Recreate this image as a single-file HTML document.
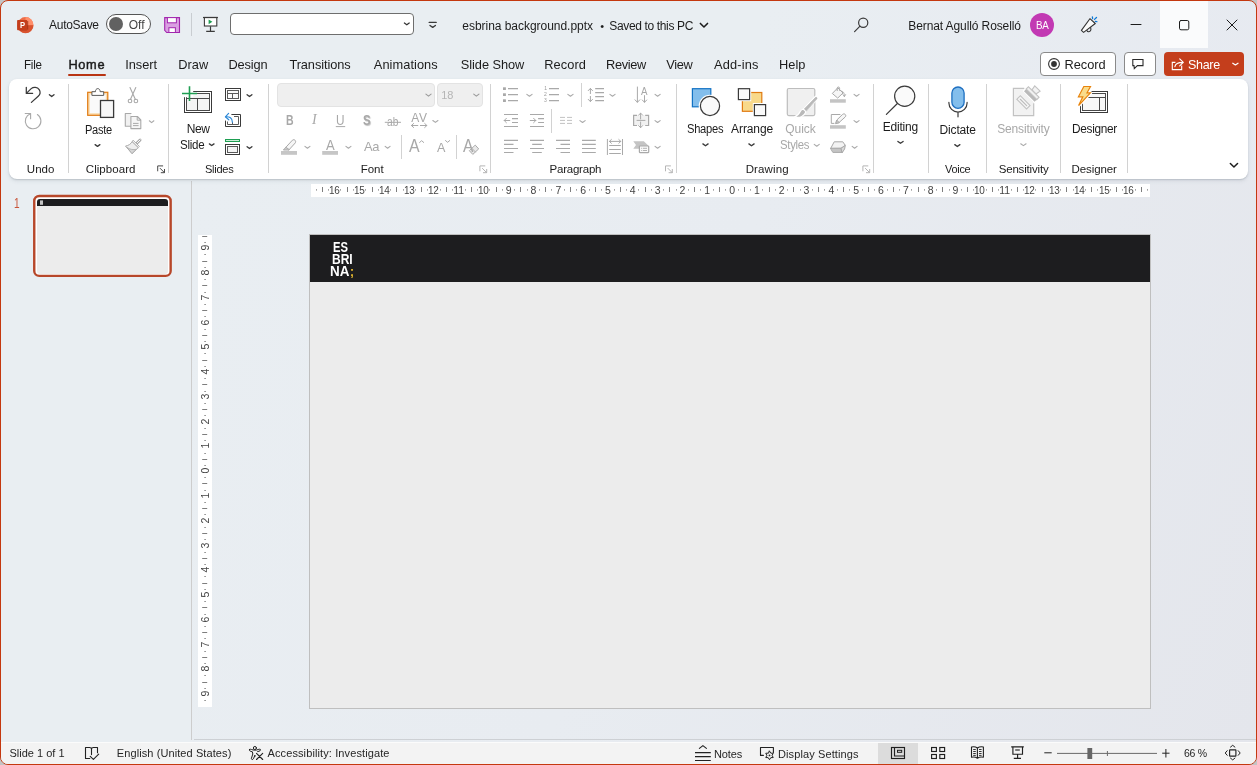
<!DOCTYPE html>
<html lang="en"><head><meta charset="utf-8"><title>esbrina background.pptx - PowerPoint</title>
<style>
html,body{margin:0;padding:0;}
body{width:1257px;height:765px;overflow:hidden;background:#c4c4c4;font-family:"Liberation Sans",sans-serif;position:relative;}
#win{position:absolute;left:0;top:0;width:1255px;height:763px;border:1px solid #c4380f;border-radius:8px;background:linear-gradient(100deg,#e9eef2 0%,#e9eef2 55%,#e6e9f0 100%);overflow:hidden;}
.abs{position:absolute;}
.t{position:absolute;white-space:nowrap;line-height:1em;}
#ribbon{left:9px;top:79px;width:1239px;height:100px;background:#fff;border-radius:8px;box-shadow:0 1px 1.5px rgba(70,80,95,.22),0 2px 4px rgba(70,80,95,.10);}
#edit{left:192px;top:180px;width:1064px;height:562px;background:linear-gradient(112deg,#e9eef2 0%,#e8ecf1 45%,#e4e6ec 100%);}
#status{left:1px;top:742px;width:1255px;height:22px;background:#f3f3f3;border-top:1px solid #fbfbfb;box-sizing:border-box;border-radius:0 0 7px 7px;}
#txt{position:absolute;left:0;top:0;width:1257px;height:765px;will-change:transform;}
.sep{position:absolute;width:1px;background:#d2d2d2;}
svg{position:absolute;left:0;top:0;overflow:visible;}
</style></head>
<body>
<div id="win"></div>
<div class="abs" id="edit"></div>
<div class="abs" style="left:191px;top:181px;width:1px;height:559px;background:#cdcdcd"></div>
<div class="abs" style="left:194px;top:739px;width:1062px;height:1px;background:#cdd0d4"></div>
<div class="abs" style="left:1160px;top:1px;width:48px;height:47px;background:#fafbfc"></div>
<div class="abs" id="ribbon"></div>
<div class="abs" style="left:311px;top:184px;width:839px;height:13px;background:#fff"></div>
<div class="abs" style="left:198px;top:235px;width:14px;height:472px;background:#fff"></div>
<div class="abs" style="left:309px;top:234px;width:842px;height:475px;background:#bfbfbf"></div>
<div class="abs" style="left:310px;top:235px;width:840px;height:473px;background:#ececec"></div>
<div class="abs" style="left:310px;top:235px;width:840px;height:47px;background:#1d1d1f"></div>
<svg width="1257" height="765"><rect x="34.25" y="196" width="136.4" height="79.9" rx="5" fill="#fff" stroke="#b7472a" stroke-width="2.4"/></svg>
<div class="abs" style="left:37px;top:199px;width:131px;height:74.5px;border-radius:3px;background:#ececec;overflow:hidden"><div style="height:7px;background:#1d1d1f"></div></div>
<div class="abs" id="status"></div>
<div class="abs" style="left:878px;top:743px;width:40px;height:21px;background:#dcdcdc"></div>
<div class="abs" style="left:106px;top:14px;width:45px;height:20px;box-sizing:border-box;border:1px solid #555;border-radius:10px;background:#fdfdfd"></div>
<div class="abs" style="left:109.2px;top:17.1px;width:13.8px;height:13.8px;border-radius:50%;background:#616161"></div>
<div class="abs" style="left:191px;top:13px;width:1px;height:23px;background:#c9cdd1"></div>
<div class="abs" style="left:230px;top:13px;width:184px;height:22px;box-sizing:border-box;border:1px solid #6e6e6e;border-radius:4px;background:#fff"></div>
<div class="abs" style="left:1030px;top:13px;width:24px;height:24px;border-radius:50%;background:#c239b3"></div>
<div class="abs" style="left:68px;top:74px;width:38px;height:2px;border-radius:1px;background:#b83413"></div>
<div class="abs" style="left:1040px;top:52px;width:76px;height:24px;box-sizing:border-box;border:1px solid #8a8a8a;border-radius:4px;background:#fff"></div>
<div class="abs" style="left:1124px;top:52px;width:32px;height:24px;box-sizing:border-box;border:1px solid #8a8a8a;border-radius:4px;background:#fff"></div>
<div class="abs" style="left:1164px;top:52px;width:80px;height:24px;border-radius:4px;background:#c43e1c"></div>
<div class="abs" style="left:277px;top:83px;width:158px;height:24px;box-sizing:border-box;border:1px solid #e3e3e3;border-radius:4px;background:#efefef"></div>
<div class="abs" style="left:437px;top:83px;width:46px;height:24px;box-sizing:border-box;border:1px solid #e3e3e3;border-radius:4px;background:#efefef"></div>
<div class="sep" style="left:68px;top:84px;height:89px"></div>
<div class="sep" style="left:168px;top:84px;height:89px"></div>
<div class="sep" style="left:268px;top:84px;height:89px"></div>
<div class="sep" style="left:490px;top:84px;height:89px"></div>
<div class="sep" style="left:676px;top:84px;height:89px"></div>
<div class="sep" style="left:873px;top:84px;height:89px"></div>
<div class="sep" style="left:928px;top:84px;height:89px"></div>
<div class="sep" style="left:986px;top:84px;height:89px"></div>
<div class="sep" style="left:1060px;top:84px;height:89px"></div>
<div class="sep" style="left:1127px;top:84px;height:89px"></div>
<div class="sep" style="left:401px;top:135px;height:24px"></div>
<div class="sep" style="left:456px;top:135px;height:24px"></div>
<div class="sep" style="left:581px;top:83px;height:24px"></div>
<div class="sep" style="left:551px;top:109px;height:24px"></div>
<svg width="1257" height="765" viewBox="0 0 1257 765" fill="none" stroke-linecap="round" stroke-linejoin="round"><circle cx="25.4" cy="25" r="7.9" fill="#ed6c47" stroke="none"/>
<path d="M25.5,17A8,8 0 0 1 33.5,25.3H25.5z" fill="#ff8f6b" stroke="none"/>
<path d="M17.5,25.3H33.5A8,8 0 0 1 17.5,25.3z" fill="#d9532f" stroke="none"/>
<path d="M19.5,29.6H28.2V21H27.2V30.2H19.5z" fill="#8c2a10" stroke="none" opacity="0.75"/>
<rect x="17.1" y="19.9" width="10.1" height="10.3" rx="0.8" stroke="none" stroke-width="0" fill="#c43e1c"/>
<path d="M164.7,17.6H179.5V32.5H166.7L164.7,30.3z" stroke="#a226ae" stroke-width="1.1" fill="#daa0e2" stroke-linejoin="miter"/>
<rect x="167.4" y="17.6" width="9.0" height="5.2" rx="0" stroke="#a226ae" stroke-width="1" fill="#fdfdfd" stroke-linejoin="miter"/>
<rect x="168.9" y="27.7" width="6.5" height="4.8" rx="0" stroke="#a226ae" stroke-width="1" fill="#fdfdfd" stroke-linejoin="miter"/>
<rect x="204.4" y="17.5" width="12.4" height="8.5" rx="0" stroke="#3a3a3a" stroke-width="1.1" fill="#fff" stroke-linejoin="miter"/>
<path d="M203,17.5H217.9" stroke="#3a3a3a" stroke-width="1.2" fill="none" stroke-linecap="butt"/>
<path d="M208.6,19.4V24.2L212.4,21.8z" stroke="none" stroke-width="0" fill="#1e9e52"/>
<path d="M210.5,26.2V31M206.2,31.4H214.8" stroke="#3a3a3a" stroke-width="1.2" fill="none" stroke-linecap="butt"/>
<path d="M404.39,23.05L406.80,24.75L409.21,23.05" stroke="#333" stroke-width="1.3"/>
<path d="M429.2,22.4H436.2" stroke="#3a3a3a" stroke-width="1.35" fill="none"/>
<path d="M430.00,25.47L432.70,27.32L435.40,25.47" stroke="#3a3a3a" stroke-width="1.35"/>
<path d="M700.38,23.46L703.95,27.00L707.52,23.46" stroke="#1c1c1c" stroke-width="1.6"/>
<circle cx="863.2" cy="22.8" r="4.6" stroke="#3a3a3a" stroke-width="1.2" fill="none"/>
<path d="M860,26.2L854.6,31.6" stroke="#3a3a3a" stroke-width="1.2"/>
<path d="M1131,24.5L1141,24.5" stroke="#1c1c1c" stroke-width="1"/>
<rect x="1179.5" y="20.5" width="9.3" height="9.3" rx="1.5" stroke="#1c1c1c" stroke-width="1" fill="none"/>
<path d="M1227,20L1237,30M1237,20L1227,30" stroke="#1c1c1c" stroke-width="1" fill="none"/>
<path d="M1089.9,18.7L1095.3,23.5L1083.6,32.4L1081.4,30.4z" stroke="#333" stroke-width="1.1" fill="#fbfbfb"/>
<path d="M1086.9,30.5C1087.6,32.2 1090.2,32.2 1090.9,29.8L1090.7,27.6" stroke="#333" stroke-width="1.1" fill="none"/>
<path d="M1092.4,17L1092.6,18.6M1094.5,19.4L1096.5,17.5M1095.3,21.4L1096.9,21.6" stroke="#0f7ad6" stroke-width="1.3" fill="none"/>
<circle cx="1054" cy="64" r="5.4" stroke="#333" stroke-width="1.1" fill="none"/>
<circle cx="1054" cy="64" r="2.9" stroke="none" stroke-width="0" fill="#333"/>
<path d="M1132.8,59.5H1143V65.6H1137.4L1134.3,68.6L1134,65.6H1132.8z" stroke="#2a2a2a" stroke-width="1.1" fill="none" stroke-linejoin="miter"/>
<path d="M1175.4,62.4H1172.3V69.6H1181.7V65.6" stroke="#fff" stroke-width="1.1" fill="none" stroke-linejoin="miter" stroke-linecap="butt"/>
<path d="M1174.9,66.6C1175.4,63.6 1178,62.4 1182.8,62.4M1179.7,58.9L1183.3,62.4L1179.7,65.9" stroke="#fff" stroke-width="1.15" fill="none"/>
<path d="M1232.79,63.25L1235.40,64.95L1238.01,63.25" stroke="#fff" stroke-width="1.3"/>
<path d="M26.3,87.3V93.4H32.6" stroke="#3a3a3a" stroke-width="1.25" fill="none"/>
<path d="M26.6,93.1L31.2,88.6C33.4,86.7 37.4,86.8 39.2,89.6C40.7,92 40,94.6 38.2,96.2L31.4,102.4" stroke="#3a3a3a" stroke-width="1.25" fill="none"/>
<path d="M49.41,94.67L51.70,96.53L53.99,94.67" stroke="#3a3a3a" stroke-width="1.35"/>
<path d="M25.2,113.5H30.6V118.7" stroke="#a9a9a9" stroke-width="1.1" fill="none"/>
<path d="M30.4,113.7A7.8,7.8 0 1 0 37.4,114.5" stroke="#a9a9a9" stroke-width="1.1" fill="none"/>
<rect x="87.7" y="92.3" width="20.1" height="23.0" rx="0" stroke="#e07b12" stroke-width="1.2" fill="#fbdcae" stroke-linejoin="miter"/>
<rect x="89.8" y="94.4" width="16.0" height="18.8" rx="0" stroke="none" stroke-width="0" fill="#fafafa" stroke-linejoin="miter"/>
<path d="M91.9,95V91.7H95.5C95.3,90 96.4,88.6 97.8,88.6C99.2,88.6 100.3,90 100.1,91.7H103.7V95z" stroke="#5a5a5a" stroke-width="1" fill="#fff"/>
<rect x="100.5" y="100.5" width="13.1" height="16.9" rx="0" stroke="#3a3a3a" stroke-width="1.3" fill="#f8f8f8" stroke-linejoin="miter"/>
<path d="M95.11,144.67L97.50,146.32L99.89,144.67" stroke="#3a3a3a" stroke-width="1.35"/>
<path d="M130,87.6L135.4,99.4M135.8,87.6L130.4,99.4" stroke="#a9a9a9" stroke-width="1.1" fill="none"/>
<circle cx="130" cy="101" r="1.8" stroke="#a9a9a9" stroke-width="1.1" fill="none"/>
<circle cx="135.9" cy="101" r="1.8" stroke="#a9a9a9" stroke-width="1.1" fill="none"/>
<path d="M131,113.5H125.3V126.3H130.6" stroke="#a9a9a9" stroke-width="1.1" fill="#f1f1f1"/>
<path d="M130.9,116.5H137.4L140.8,120V128.6H130.9z" stroke="#a9a9a9" stroke-width="1.1" fill="#f6f6f6"/>
<path d="M137.2,116.7V120.2H140.6" stroke="#a9a9a9" stroke-width="1" fill="none"/>
<path d="M133.4,123.4H138.2M133.4,125.6H138.2" stroke="#a9a9a9" stroke-width="1" fill="none"/>
<path d="M149.33,120.79L151.60,122.65L153.87,120.79" stroke="#a9a9a9" stroke-width="1.1"/>
<path d="M136.5,143.5L140.1,139.9" stroke="#a9a9a9" stroke-width="2.8" fill="none"/>
<path d="M136.5,143.5L140.1,139.9" stroke="#fafafa" stroke-width="1" fill="none"/>
<path d="M132.3,141.7L138.3,147.5L132.2,153.6L125.5,146.1C128.5,145.6 130.8,144 132.3,141.7z" stroke="#a9a9a9" stroke-width="1" fill="#efefef"/>
<path d="M127.2,147.6C130,149.6 133.4,149.9 136.2,149.4L132.2,153.4z" stroke="#a9a9a9" stroke-width="0.8" fill="#d6d6d6"/>
<path d="M133.4,140.5L139.4,146.4L138.3,147.5L132.3,141.7z" stroke="#a9a9a9" stroke-width="0.9" fill="#f6f6f6"/>
<path d="M157.7,170.9V165.9H162.7" stroke="#4a4a4a" stroke-width="1" fill="none"/>
<path d="M160.2,168.4L164.39999999999998,172.6M161.2,172.70000000000002H164.5V169.4" stroke="#4a4a4a" stroke-width="1" fill="none"/>
<rect x="184.5" y="91.5" width="27.0" height="21.0" rx="0" stroke="#3a3a3a" stroke-width="1" fill="#fff" stroke-linejoin="miter"/>
<rect x="186.5" y="93.5" width="23.0" height="17.0" rx="0" stroke="#4a4a4a" stroke-width="1" fill="#f4f4f4" stroke-linejoin="miter"/>
<path d="M186.5,98.5H209.5M197.5,98.5V110.5" stroke="#4a4a4a" stroke-width="1" fill="none" stroke-linecap="butt"/>
<rect x="181" y="85" width="12.2" height="12.2" rx="0" stroke="none" stroke-width="0" fill="#fff" stroke-linejoin="miter"/>
<path d="M182,93.5H197M189.5,86.2V101" stroke="#1e9e52" stroke-width="1.6" fill="none" stroke-linecap="butt"/>
<path d="M209.41,143.87L211.70,145.52L214.00,143.87" stroke="#3a3a3a" stroke-width="1.35"/>
<rect x="225.5" y="88.5" width="15.0" height="12.0" rx="0" stroke="#3a3a3a" stroke-width="1" fill="#fff" stroke-linejoin="miter"/>
<rect x="227.5" y="90.5" width="11.0" height="8.0" rx="0" stroke="#5a5a5a" stroke-width="1" fill="#fafafa" stroke-linejoin="miter"/>
<path d="M227.5,93.5H238.5M232.5,93.5V98.5" stroke="#5a5a5a" stroke-width="1" fill="none" stroke-linecap="butt"/>
<path d="M247.10,94.67L249.50,96.53L251.90,94.67" stroke="#3a3a3a" stroke-width="1.35"/>
<path d="M231.4,114.5H240.5V126.5H225.5V120.6" stroke="#3a3a3a" stroke-width="1" fill="none" stroke-linecap="butt"/>
<path d="M234,116.5H238.5V124.5H227.5V121.5M232.5,122V124.5" stroke="#5a5a5a" stroke-width="1" fill="none" stroke-linecap="butt"/>
<path d="M225.8,116.8C229.4,116.4 232.4,118 232.4,122.2" stroke="#2b88d8" stroke-width="1.2" fill="none"/>
<path d="M228.6,113.4L225.4,116.8L228.8,119.8" stroke="#2b88d8" stroke-width="1.2" fill="none"/>
<rect x="225.5" y="139.5" width="14.0" height="2.0" rx="0" stroke="#1e9e52" stroke-width="1" fill="#cdeed8" stroke-linejoin="miter"/>
<rect x="225.5" y="144.5" width="14.0" height="10.0" rx="0" stroke="#3a3a3a" stroke-width="1" fill="#fff" stroke-linejoin="miter"/>
<rect x="227.5" y="146.5" width="10.0" height="6.0" rx="0" stroke="#5a5a5a" stroke-width="1" fill="#f4f4f4" stroke-linejoin="miter"/>
<path d="M247.10,146.67L249.50,148.52L251.90,146.67" stroke="#3a3a3a" stroke-width="1.35"/>
<path d="M425.93,94.09L428.50,96.15L431.07,94.09" stroke="#9a9a9a" stroke-width="1.1"/>
<path d="M473.73,94.09L476.35,96.15L478.97,94.09" stroke="#9a9a9a" stroke-width="1.1"/>
<path d="M336.2,126.6L344.8,126.6" stroke="#a9a9a9" stroke-width="1"/>
<path d="M385.2,122.3L400.6,122.3" stroke="#a9a9a9" stroke-width="1"/>
<path d="M411.5,125.5H417.8M413.6,123.5L411.4,125.5L413.6,127.5" stroke="#a9a9a9" stroke-width="1" fill="none"/>
<path d="M420.4,125.5H426.8M424.7,123.5L426.9,125.5L424.7,127.5" stroke="#a9a9a9" stroke-width="1" fill="none"/>
<path d="M432.83,120.48L435.40,122.35L437.97,120.48" stroke="#a9a9a9" stroke-width="1.1"/>
<rect x="281" y="151" width="16" height="3.8" rx="0" stroke="none" stroke-width="0" fill="#c6c6c6" stroke-linejoin="miter"/>
<path d="M285.6,147.6L292.4,140.2C293.2,139.4 294.6,139.6 295.2,140.4C295.8,141.2 295.8,142.2 295.2,143L289,149.8z" stroke="#a9a9a9" stroke-width="1" fill="#f6f6f6"/>
<path d="M285.6,147.6L283.4,150H288.6L289,149.8z" stroke="#a9a9a9" stroke-width="1" fill="#cfcfcf"/>
<path d="M304.93,146.38L307.45,148.25L309.97,146.38" stroke="#a9a9a9" stroke-width="1.1"/>
<rect x="322.2" y="151" width="15.8" height="3.8" rx="0" stroke="none" stroke-width="0" fill="#c6c6c6" stroke-linejoin="miter"/>
<path d="M345.93,146.38L348.45,148.25L350.97,146.38" stroke="#a9a9a9" stroke-width="1.1"/>
<path d="M385.13,146.38L387.60,148.25L390.07,146.38" stroke="#a9a9a9" stroke-width="1.1"/>
<path d="M419.60,142.45L421.65,140.70L423.70,142.45" stroke="#a9a9a9" stroke-width="1"/>
<path d="M445.50,140.55L447.60,142.30L449.70,140.55" stroke="#a9a9a9" stroke-width="1"/>
<path d="M475.5,145.4L478.7,148.9L472.8,154.4L469.6,151z" stroke="#fff" stroke-width="2.4" fill="#fff"/>
<path d="M475.5,145.4L478.7,148.9L472.8,154.4L469.6,151z" stroke="#a9a9a9" stroke-width="1" fill="#e9e9e9"/>
<path d="M472.2,148.6L475.4,152" stroke="#a9a9a9" stroke-width="0.9" fill="none"/>
<path d="M479.9,170.9V165.9H484.9" stroke="#b5b5b5" stroke-width="1" fill="none"/>
<path d="M482.4,168.4L486.59999999999997,172.6M483.4,172.70000000000002H486.7V169.4" stroke="#b5b5b5" stroke-width="1" fill="none"/>
<rect x="503" y="87.3" width="2.9" height="2.7" rx="0" stroke="none" stroke-width="0" fill="#a9a9a9" stroke-linejoin="miter"/>
<rect x="503" y="93.3" width="2.9" height="2.7" rx="0" stroke="none" stroke-width="0" fill="#a9a9a9" stroke-linejoin="miter"/>
<rect x="503" y="99.3" width="2.9" height="2.7" rx="0" stroke="none" stroke-width="0" fill="#a9a9a9" stroke-linejoin="miter"/>
<path d="M508,88.6H518M508,94.6H518M508,100.6H518" stroke="#a9a9a9" stroke-width="1.1" fill="none" stroke-linecap="butt"/>
<path d="M526.83,94.39L529.45,96.25L532.07,94.39" stroke="#a9a9a9" stroke-width="1.1"/>
<path d="M549,88.6H559M549,94.6H559M549,100.6H559" stroke="#a9a9a9" stroke-width="1.1" fill="none" stroke-linecap="butt"/>
<path d="M567.83,94.39L570.45,96.25L573.07,94.39" stroke="#a9a9a9" stroke-width="1.1"/>
<path d="M590.4,88.6V93.6M588.3,90.6L590.4,88.4L592.5,90.6" stroke="#a9a9a9" stroke-width="1" fill="none"/>
<path d="M590.4,96.4V101.4M588.3,99.4L590.4,101.6L592.5,99.4" stroke="#a9a9a9" stroke-width="1" fill="none"/>
<path d="M595.2,88.6H604M595.2,92.6H604M595.2,96.6H604M595.2,100.6H604" stroke="#a9a9a9" stroke-width="1.1" fill="none" stroke-linecap="butt"/>
<path d="M609.93,94.39L612.50,96.25L615.07,94.39" stroke="#a9a9a9" stroke-width="1.1"/>
<path d="M637.4,87V102.2M635,99.8L637.4,102.3L639.8,99.8" stroke="#a9a9a9" stroke-width="1" fill="none"/>
<path d="M644.5,95.6V102.2M642.3,100L644.5,102.3L646.7,100" stroke="#a9a9a9" stroke-width="1" fill="none"/>
<path d="M655.03,94.39L657.60,96.25L660.17,94.39" stroke="#a9a9a9" stroke-width="1.1"/>
<path d="M504,114.5H518M504,126.5H518M512,118.6H518M512,122.5H518" stroke="#a9a9a9" stroke-width="1.1" fill="none" stroke-linecap="butt"/>
<path d="M504.2,120.5H509.8M506.4,118.3L504.2,120.5L506.4,122.7" stroke="#a9a9a9" stroke-width="1" fill="none"/>
<path d="M530,114.5H544M530,126.5H544M538.1,118.6H544M538.1,122.5H544" stroke="#a9a9a9" stroke-width="1.1" fill="none" stroke-linecap="butt"/>
<path d="M530.2,120.5H535.8M533.6,118.3L535.8,120.5L533.6,122.7" stroke="#a9a9a9" stroke-width="1" fill="none"/>
<path d="M560,117.4H565M560,120.4H565M560,123.4H565M567,117.4H572M567,120.4H572M567,123.4H572" stroke="#c2c2c2" stroke-width="1" fill="none" stroke-linecap="butt"/>
<path d="M579.93,120.59L582.55,122.45L585.17,120.59" stroke="#a9a9a9" stroke-width="1.1"/>
<rect x="634" y="115.4" width="14" height="10.0" rx="0" stroke="none" stroke-width="0" fill="#f1f1f1" stroke-linejoin="miter"/>
<path d="M637,115.3H633.6V125.5H637M645.2,115.3H648.6V125.5H645.2" stroke="#a9a9a9" stroke-width="1.2" fill="none" stroke-linecap="butt" stroke-linejoin="miter"/>
<path d="M637,120.4H645" stroke="#a9a9a9" stroke-width="1" fill="none"/>
<path d="M640.6,113.2V119M638.6,115.2L640.6,113.1L642.6,115.2" stroke="#a9a9a9" stroke-width="1" fill="none"/>
<path d="M640.6,122V127.6M638.6,125.6L640.6,127.7L642.6,125.6" stroke="#a9a9a9" stroke-width="1" fill="none"/>
<path d="M655.03,120.59L657.60,122.45L660.17,120.59" stroke="#a9a9a9" stroke-width="1.1"/>
<path d="M504.0,140.4H518.0M504.0,144.4H513.5M504.0,148.5H518.0M504.0,152.5H513.5" stroke="#a9a9a9" stroke-width="1.1" fill="none" stroke-linecap="butt"/>
<path d="M530.0,140.4H544.0M532.2,144.4H541.8M530.0,148.5H544.0M532.2,152.5H541.8" stroke="#a9a9a9" stroke-width="1.1" fill="none" stroke-linecap="butt"/>
<path d="M556.0,140.4H570.0M560.5,144.4H570.0M556.0,148.5H570.0M560.5,152.5H570.0" stroke="#a9a9a9" stroke-width="1.1" fill="none" stroke-linecap="butt"/>
<path d="M582.0,140.4H595.8M582.0,144.4H595.8M582.0,148.5H595.8M582.0,152.5H595.8" stroke="#a9a9a9" stroke-width="1.1" fill="none" stroke-linecap="butt"/>
<path d="M607.4,139V155M622.5,139V155" stroke="#a9a9a9" stroke-width="1" fill="none" stroke-linecap="butt"/>
<path d="M609.4,141.4H620.8M611.4,139.5L609.4,141.4L611.4,143.3M618.8,139.5L620.8,141.4L618.8,143.3" stroke="#a9a9a9" stroke-width="1" fill="none"/>
<path d="M609.2,145.5H620.8M609.2,149.5H620.8M609.2,153.5H620.8" stroke="#a9a9a9" stroke-width="1.1" fill="none" stroke-linecap="butt"/>
<path d="M633.3,141.2H643.8L648,145.2V148.8H633.3L636,145z" stroke="none" stroke-width="0" fill="#c4c4c4"/>
<rect x="639.4" y="146" width="9.3" height="6.6" rx="0.5" stroke="#a9a9a9" stroke-width="1.2" fill="#fbfbfb"/>
<path d="M641,148.3H641.8M642.8,148.3H647M641,150.5H641.8M642.8,150.5H647" stroke="#a9a9a9" stroke-width="0.9" fill="none" stroke-linecap="butt"/>
<path d="M655.03,146.38L657.60,148.25L660.17,146.38" stroke="#a9a9a9" stroke-width="1.1"/>
<path d="M665.5,170.9V165.9H670.5" stroke="#b5b5b5" stroke-width="1" fill="none"/>
<path d="M668,168.4L672.2,172.6M669,172.70000000000002H672.3V169.4" stroke="#b5b5b5" stroke-width="1" fill="none"/>
<rect x="692.4" y="88.7" width="18.4" height="18.1" rx="0" stroke="#1272c4" stroke-width="1.2" fill="#83beec" stroke-linejoin="miter"/>
<circle cx="710" cy="106" r="9.6" stroke="#fff" stroke-width="3.4" fill="#fff"/>
<circle cx="710" cy="106" r="9.6" stroke="#3a3a3a" stroke-width="1.2" fill="#fafafa"/>
<path d="M702.90,143.87L705.50,145.72L708.10,143.87" stroke="#3a3a3a" stroke-width="1.35"/>
<rect x="742.4" y="92.5" width="19.4" height="18.8" rx="0" stroke="#e07b12" stroke-width="1.2" fill="#f8d98a" stroke-linejoin="miter"/>
<rect x="738.4" y="88.7" width="11.2" height="10.9" rx="0" stroke="#fff" stroke-width="3.2" fill="#fff" stroke-linejoin="miter"/>
<rect x="754.4" y="104.6" width="11.2" height="11.0" rx="0" stroke="#fff" stroke-width="3.2" fill="#fff" stroke-linejoin="miter"/>
<rect x="738.4" y="88.7" width="11.2" height="10.9" rx="0" stroke="#3a3a3a" stroke-width="1.2" fill="#fafafa" stroke-linejoin="miter"/>
<rect x="754.4" y="104.6" width="11.2" height="11.0" rx="0" stroke="#3a3a3a" stroke-width="1.2" fill="#fafafa" stroke-linejoin="miter"/>
<path d="M748.90,143.87L751.50,145.72L754.10,143.87" stroke="#3a3a3a" stroke-width="1.35"/>
<rect x="787.3" y="88.5" width="27.5" height="27.1" rx="1.5" stroke="#bdbdbd" stroke-width="1.2" fill="#f0f0f0"/>
<path d="M816.6,97.6L804.6,110.4" stroke="#fff" stroke-width="4.6" fill="none"/>
<path d="M817,98.6C817.4,97.6 816.2,96.8 815.4,97.6L803.8,109.4L805.8,111.4z" stroke="#b4b4b4" stroke-width="0.6" fill="#b9b9b9"/>
<path d="M806,111.8C804.2,116.6 799.2,118.4 794.6,116.9C798,115.6 799.4,113.2 800.4,111.2C801.4,109.4 803,108.9 804.2,109.8z" stroke="#fff" stroke-width="1.2" fill="#b9b9b9"/>
<path d="M814.23,144.38L816.75,146.25L819.27,144.38" stroke="#a9a9a9" stroke-width="1.1"/>
<rect x="830" y="99.2" width="15.8" height="3.5" rx="0" stroke="none" stroke-width="0" fill="#c4c4c4" stroke-linejoin="miter"/>
<path d="M832.6,93.2L837.8,87.8L843,93L838,97.8z" stroke="#a9a9a9" stroke-width="1" fill="#f6f6f6"/>
<path d="M837.2,90.6V88.2C837.2,86.6 839.6,86.6 839.6,88.2V90.4" stroke="#a9a9a9" stroke-width="1" fill="none"/>
<path d="M841.6,91C843.6,91.4 844.6,93.4 844.4,96.4M843,94.6L844.4,96.6L845.6,94.6" stroke="#a9a9a9" stroke-width="0.9" fill="none"/>
<path d="M854.03,94.39L856.55,96.25L859.07,94.39" stroke="#a9a9a9" stroke-width="1.1"/>
<rect x="830" y="125.2" width="15.8" height="3.5" rx="0" stroke="none" stroke-width="0" fill="#c4c4c4" stroke-linejoin="miter"/>
<path d="M840,114.5H831.3V123.4H834" stroke="#a9a9a9" stroke-width="1" fill="none"/>
<path d="M835.8,123.2L836.8,120L842.6,114.4C843.4,113.6 844.8,113.8 845.4,114.6C846,115.4 845.8,116.4 845.2,117L839.2,122.4z" stroke="#a9a9a9" stroke-width="1" fill="#f6f6f6"/>
<path d="M835.8,123.2L836.8,120L839.2,122.4z" stroke="#a9a9a9" stroke-width="0.8" fill="#c4c4c4"/>
<path d="M854.03,120.59L856.55,122.45L859.07,120.59" stroke="#a9a9a9" stroke-width="1.1"/>
<path d="M830.8,148.2L834.2,141.8H842.8L845.3,145.4L841.2,148.2z" stroke="#a9a9a9" stroke-width="1" fill="#f3f3f3"/>
<path d="M830.8,148.2H841.2L842.4,152.4H833.2z" stroke="#a9a9a9" stroke-width="1" fill="#c4c4c4"/>
<path d="M841.2,148.2L845.3,145.4L844.6,149L842.4,152.4z" stroke="#a9a9a9" stroke-width="1" fill="#d9d9d9"/>
<path d="M852.13,146.38L854.60,148.25L857.07,146.38" stroke="#a9a9a9" stroke-width="1.1"/>
<path d="M862.9,170.9V165.9H867.9" stroke="#b5b5b5" stroke-width="1" fill="none"/>
<path d="M865.4,168.4L869.6,172.6M866.4,172.70000000000002H869.6999999999999V169.4" stroke="#b5b5b5" stroke-width="1" fill="none"/>
<circle cx="904.7" cy="96.3" r="10.1" stroke="#3a3a3a" stroke-width="1.2" fill="#fafafa"/>
<path d="M897.4,103.5L886.4,114.4" stroke="#3a3a3a" stroke-width="1.2"/>
<path d="M897.90,141.47L900.50,143.32L903.10,141.47" stroke="#3a3a3a" stroke-width="1.35"/>
<rect x="951.9" y="87" width="12.2" height="21.3" rx="6.1" stroke="#1e6fc0" stroke-width="1.3" fill="#83beec"/>
<path d="M948.9,102.4V103A9.1,9.1 0 0 0 967.1,103V102.4M958,112.2V116.8" stroke="#3a3a3a" stroke-width="1.2" fill="none"/>
<path d="M954.80,144.67L957.35,146.52L959.89,144.67" stroke="#3a3a3a" stroke-width="1.35"/>
<rect x="1013.3" y="88.4" width="20.5" height="27.3" rx="0" stroke="none" stroke-width="0" fill="#f2f2f2" stroke-linejoin="miter"/>
<path d="M1024.2,88.4H1013.4V115.6H1033.7V103.2" stroke="#c2c2c2" stroke-width="1.2" fill="none" stroke-linecap="butt" stroke-linejoin="miter"/>
<g transform="translate(1031.9,93.9) rotate(45)" stroke-linejoin="miter"><rect x="-8.6" y="-3.4" width="17.2" height="8" fill="#fff" stroke="none"/><rect x="-8" y="8.2" width="16" height="7.6" fill="#f2f2f2" stroke="none"/><path d="M-3.7,-7.7H3.9L2.9,-2.8H-2.7z" fill="#f3f3f3" stroke="#c2c2c2" stroke-width="1.1"/><rect x="-7.5" y="-2.6" width="15" height="3.2" fill="#f1f1f1" stroke="#c2c2c2" stroke-width="1.1"/><rect x="-7.5" y="0.8" width="15" height="2.9" fill="#b9b9b9" stroke="none"/><rect x="-6.8" y="9.5" width="13.7" height="5" fill="#f6f6f6" stroke="#c2c2c2" stroke-width="1.1"/><path d="M-4.4,12H4.6" stroke="#bdbdbd" stroke-width="1.2"/></g>
<path d="M1020.73,143.78L1023.40,145.65L1026.07,143.78" stroke="#a9a9a9" stroke-width="1.1"/>
<rect x="1080.5" y="91.5" width="27.0" height="21.0" rx="0" stroke="#3a3a3a" stroke-width="1" fill="#fff" stroke-linejoin="miter"/>
<rect x="1082.5" y="93.5" width="23.0" height="17.0" rx="0" stroke="#4a4a4a" stroke-width="1" fill="#f8f8f8" stroke-linejoin="miter"/>
<path d="M1082.5,97.5H1105.5M1099.5,97.5V110.5" stroke="#4a4a4a" stroke-width="1" fill="none" stroke-linecap="butt"/>
<path d="M1083.8,86.5H1090.5L1087,92.8H1090.4L1078.6,105.6L1082.8,96.8H1078.4z" stroke="#fff" stroke-width="3.6" fill="#fff"/>
<path d="M1083.8,86.5H1090.5L1087,92.8H1090.4L1078.6,105.6L1082.8,96.8H1078.4z" stroke="#e8830c" stroke-width="1.2" fill="#f9dc8c" stroke-linejoin="miter"/>
<path d="M1230.35,163.53L1233.95,167.05L1237.55,163.53" stroke="#1c1c1c" stroke-width="1.5"/>
<path d="M89.8,758.5H85.5V747.5H89.6C90.8,747.5 91.5,748.2 91.5,749.2V754.6M91.5,749.2C91.5,748.2 92.2,747.5 93.4,747.5H97.5V752.8" stroke="#222" stroke-width="1.1" fill="none"/>
<path d="M90.2,756.3L93.4,759.4L98.7,754.2" stroke="#222" stroke-width="1.1" fill="none"/>
<circle cx="254.9" cy="748" r="1.55" stroke="#222" stroke-width="1" fill="none"/>
<path d="M249.4,749.4C248.8,750.6 250,751.4 252.4,751.8L252.8,754L251.4,758.4C251.2,759.6 252.8,760 253.4,758.8L254.9,755.4" stroke="#222" stroke-width="1" fill="none"/>
<path d="M249.4,749.4C251,748.6 252,750.2 254.9,750.2C257.8,750.2 258.8,748.6 260.4,749.4C261,750.4 260,751.2 257.6,751.6" stroke="#222" stroke-width="1" fill="none"/>
<circle cx="254.9" cy="756" r="0.8" stroke="none" stroke-width="0" fill="#222"/>
<path d="M256.5,753.3L262.7,759.5M262.7,753.3L256.5,759.5" stroke="#222" stroke-width="1.1" fill="none"/>
<path d="M699.4,748.4L702.9,745.6L706.4,748.4" stroke="#222" stroke-width="1.1" fill="none"/>
<path d="M695,752.6H710.8M695,756.6H710.8M695,760.5H710.8" stroke="#222" stroke-width="1.1" fill="none" stroke-linecap="butt"/>
<path d="M763.4,755.4H760.5V747.5H773.4V752.4" stroke="#222" stroke-width="1.1" fill="none"/>
<path d="M769.50,751.10L770.80,753.15L773.22,753.25L772.10,755.40L773.22,757.55L770.80,757.65L769.50,759.70L768.20,757.65L765.78,757.55L766.90,755.40L765.78,753.25L768.20,753.15z" stroke="#222" stroke-width="1" fill="#f3f3f3"/>
<circle cx="769.5" cy="755.4" r="0.9" stroke="none" stroke-width="0" fill="#222"/>
<rect x="891.5" y="747.5" width="13.0" height="11.0" rx="0" stroke="#1f1f1f" stroke-width="1.15" fill="none" stroke-linejoin="miter"/>
<path d="M894.5,747.5V756H904.5" stroke="#1f1f1f" stroke-width="1.15" fill="none" stroke-linecap="butt" stroke-linejoin="miter"/>
<rect x="897.5" y="750.3" width="4.2" height="2.0" rx="0" stroke="#1f1f1f" stroke-width="1" fill="none" stroke-linejoin="miter"/>
<rect x="931.6" y="747.5" width="4.8" height="4.0" rx="0" stroke="#1f1f1f" stroke-width="1.15" fill="none" stroke-linejoin="miter"/>
<rect x="931.6" y="754.5" width="4.8" height="4.0" rx="0" stroke="#1f1f1f" stroke-width="1.15" fill="none" stroke-linejoin="miter"/>
<rect x="939.8" y="747.5" width="4.8" height="4.0" rx="0" stroke="#1f1f1f" stroke-width="1.15" fill="none" stroke-linejoin="miter"/>
<rect x="939.8" y="754.5" width="4.8" height="4.0" rx="0" stroke="#1f1f1f" stroke-width="1.15" fill="none" stroke-linejoin="miter"/>
<path d="M977.4,748C975.4,746.6 973.4,746.6 971.5,747V757.2C973.4,756.8 975.4,756.8 977.4,758.2C979.4,756.8 981.4,756.8 983.4,757.2V747C981.4,746.6 979.4,746.6 977.4,748zM977.4,748V758" stroke="#1f1f1f" stroke-width="1.1" fill="none"/>
<path d="M973.2,749.5H975.8M973.2,751.5H975.8M973.2,753.5H975.8M973.2,755.4H975.8M979,749.5H981.6M979,751.5H981.6M979,753.5H981.6M979,755.4H981.6" stroke="#1f1f1f" stroke-width="0.9" fill="none" stroke-linecap="butt"/>
<path d="M1011.2,746.9H1023.8M1012.9,747V754.2H1022.5V747M1017.6,754.2V758.2M1013.8,758.4H1021" stroke="#1f1f1f" stroke-width="1.15" fill="none" stroke-linecap="butt" stroke-linejoin="miter"/>
<path d="M1015.2,750H1019.8" stroke="#1f1f1f" stroke-width="1.15" fill="none" stroke-linecap="butt"/>
<path d="M1044.3,752.8H1051.7" stroke="#222" stroke-width="1" fill="none" stroke-linecap="butt"/>
<path d="M1057,753.4H1157" stroke="#6a6a6a" stroke-width="1" fill="none" stroke-linecap="butt"/>
<rect x="1087.4" y="748" width="4.8" height="11" rx="0" stroke="none" stroke-width="0" fill="#666" stroke-linejoin="miter"/>
<path d="M1107.4,751V756" stroke="#6a6a6a" stroke-width="1" fill="none" stroke-linecap="butt"/>
<path d="M1162.2,753.2H1169.5M1165.9,749V757.5" stroke="#222" stroke-width="1" fill="none" stroke-linecap="butt"/>
<rect x="1229.6" y="749.9" width="6.3" height="6.2" rx="0.3" stroke="#222" stroke-width="1.15" fill="none"/>
<path d="M1230.5,747.1L1232.7,745.3L1234.9,747.1M1230.5,758.1L1232.7,759.9L1234.9,758.1M1227.2,750.7L1225.2,753L1227.2,755.3M1238.2,750.7L1240.2,753L1238.2,755.3" stroke="#222" stroke-width="1" fill="none"/>
<path d="M322.5,187V192M347.5,187V192M372.5,187V192M396.5,187V192M421.5,187V192M446.5,187V192M471.5,187V192M496.5,187V192M520.5,187V192M545.5,187V192M570.5,187V192M595.5,187V192M620.5,187V192M645.5,187V192M669.5,187V192M694.5,187V192M719.5,187V192M744.5,187V192M769.5,187V192M793.5,187V192M818.5,187V192M843.5,187V192M868.5,187V192M893.5,187V192M918.5,187V192M942.5,187V192M967.5,187V192M992.5,187V192M1017.5,187V192M1042.5,187V192M1066.5,187V192M1091.5,187V192M1116.5,187V192M1141.5,187V192" stroke="#7e7e7e" stroke-width="1" fill="none" stroke-linecap="butt"/>
<path d="M316.5,189.2V190.6M328.5,189.2V190.6M340.5,189.2V190.6M353.5,189.2V190.6M365.5,189.2V190.6M378.5,189.2V190.6M390.5,189.2V190.6M403.5,189.2V190.6M415.5,189.2V190.6M427.5,189.2V190.6M440.5,189.2V190.6M452.5,189.2V190.6M465.5,189.2V190.6M477.5,189.2V190.6M489.5,189.2V190.6M502.5,189.2V190.6M514.5,189.2V190.6M527.5,189.2V190.6M539.5,189.2V190.6M551.5,189.2V190.6M564.5,189.2V190.6M576.5,189.2V190.6M589.5,189.2V190.6M601.5,189.2V190.6M614.5,189.2V190.6M626.5,189.2V190.6M638.5,189.2V190.6M651.5,189.2V190.6M663.5,189.2V190.6M676.5,189.2V190.6M688.5,189.2V190.6M700.5,189.2V190.6M713.5,189.2V190.6M725.5,189.2V190.6M738.5,189.2V190.6M750.5,189.2V190.6M762.5,189.2V190.6M775.5,189.2V190.6M787.5,189.2V190.6M800.5,189.2V190.6M812.5,189.2V190.6M824.5,189.2V190.6M837.5,189.2V190.6M849.5,189.2V190.6M862.5,189.2V190.6M874.5,189.2V190.6M887.5,189.2V190.6M899.5,189.2V190.6M911.5,189.2V190.6M924.5,189.2V190.6M936.5,189.2V190.6M949.5,189.2V190.6M961.5,189.2V190.6M973.5,189.2V190.6M986.5,189.2V190.6M998.5,189.2V190.6M1011.5,189.2V190.6M1023.5,189.2V190.6M1035.5,189.2V190.6M1048.5,189.2V190.6M1060.5,189.2V190.6M1073.5,189.2V190.6M1085.5,189.2V190.6M1097.5,189.2V190.6M1110.5,189.2V190.6M1122.5,189.2V190.6M1135.5,189.2V190.6M1147.5,189.2V190.6" stroke="#8e8e8e" stroke-width="1" fill="none" stroke-linecap="butt"/>
<path d="M202.2,236.5H207.2M202.2,261.5H207.2M202.2,285.5H207.2M202.2,310.5H207.2M202.2,335.5H207.2M202.2,360.5H207.2M202.2,384.5H207.2M202.2,409.5H207.2M202.2,434.5H207.2M202.2,459.5H207.2M202.2,483.5H207.2M202.2,508.5H207.2M202.2,533.5H207.2M202.2,558.5H207.2M202.2,583.5H207.2M202.2,607.5H207.2M202.2,632.5H207.2M202.2,657.5H207.2M202.2,682.5H207.2" stroke="#7e7e7e" stroke-width="1" fill="none" stroke-linecap="butt"/>
<path d="M204.3,242.5H205.9M204.3,254.5H205.9M204.3,267.5H205.9M204.3,279.5H205.9M204.3,292.5H205.9M204.3,304.5H205.9M204.3,316.5H205.9M204.3,329.5H205.9M204.3,341.5H205.9M204.3,353.5H205.9M204.3,366.5H205.9M204.3,378.5H205.9M204.3,391.5H205.9M204.3,403.5H205.9M204.3,415.5H205.9M204.3,428.5H205.9M204.3,440.5H205.9M204.3,453.5H205.9M204.3,465.5H205.9M204.3,477.5H205.9M204.3,490.5H205.9M204.3,502.5H205.9M204.3,514.5H205.9M204.3,527.5H205.9M204.3,539.5H205.9M204.3,552.5H205.9M204.3,564.5H205.9M204.3,576.5H205.9M204.3,589.5H205.9M204.3,601.5H205.9M204.3,614.5H205.9M204.3,626.5H205.9M204.3,638.5H205.9M204.3,651.5H205.9M204.3,663.5H205.9M204.3,675.5H205.9M204.3,688.5H205.9M204.3,700.5H205.9" stroke="#8e8e8e" stroke-width="1" fill="none" stroke-linecap="butt"/>
<rect x="40" y="200.4" width="3" height="4.4" rx="0" stroke="none" stroke-width="0" fill="#c4c4c4" stroke-linejoin="miter"/></svg>
<div id="txt">
<span class="t" style="left:19.90px;top:21.00px;font-size:8.4px;color:#fff;font-weight:700;transform:scaleX(0.9103);transform-origin:0 0;">P</span>
<span class="t" style="left:49.10px;top:19.00px;font-size:12px;color:#1c1c1c;letter-spacing:-0.305px;">AutoSave</span>
<span class="t" style="left:128.80px;top:19.00px;font-size:12px;color:#444;letter-spacing:-0.008px;">Off</span>
<span class="t" style="left:462.30px;top:20.00px;font-size:12px;color:#1c1c1c;letter-spacing:-0.033px;">esbrina background.pptx</span>
<span class="t" style="left:600.30px;top:21.00px;font-size:11px;color:#1c1c1c;">•</span>
<span class="t" style="left:609.30px;top:20.00px;font-size:12px;color:#1c1c1c;letter-spacing:-0.358px;">Saved to this PC</span>
<span class="t" style="left:908.30px;top:20.00px;font-size:12px;color:#1c1c1c;letter-spacing:-0.102px;">Bernat Agulló Roselló</span>
<span class="t" style="left:1035.50px;top:20.00px;font-size:10.5px;color:#fff;letter-spacing:-0.300px;transform:scaleX(0.9338);transform-origin:0 0;">BA</span>
<span class="t" style="left:23.60px;top:59.00px;font-size:12.8px;color:#1c1c1c;letter-spacing:-0.300px;transform:scaleX(0.9077);transform-origin:0 0;">File</span>
<span class="t" style="left:68.40px;top:59.00px;font-size:12.8px;color:#1c1c1c;letter-spacing:0.683px;-webkit-text-stroke:0.45px #1c1c1c;">Home</span>
<span class="t" style="left:125.30px;top:59.00px;font-size:12.8px;color:#1c1c1c;letter-spacing:-0.063px;">Insert</span>
<span class="t" style="left:178.20px;top:59.00px;font-size:12.8px;color:#1c1c1c;letter-spacing:0.033px;">Draw</span>
<span class="t" style="left:228.40px;top:59.00px;font-size:12.8px;color:#1c1c1c;letter-spacing:-0.109px;">Design</span>
<span class="t" style="left:289.40px;top:59.00px;font-size:12.8px;color:#1c1c1c;letter-spacing:-0.083px;">Transitions</span>
<span class="t" style="left:373.80px;top:59.00px;font-size:12.8px;color:#1c1c1c;letter-spacing:0.064px;">Animations</span>
<span class="t" style="left:460.80px;top:59.00px;font-size:12.8px;color:#1c1c1c;letter-spacing:-0.053px;">Slide Show</span>
<span class="t" style="left:544.20px;top:59.00px;font-size:12.8px;color:#1c1c1c;letter-spacing:0.107px;">Record</span>
<span class="t" style="left:606.00px;top:59.00px;font-size:12.8px;color:#1c1c1c;letter-spacing:-0.362px;">Review</span>
<span class="t" style="left:666.30px;top:59.00px;font-size:12.8px;color:#1c1c1c;letter-spacing:-0.315px;">View</span>
<span class="t" style="left:714.10px;top:59.00px;font-size:12.8px;color:#1c1c1c;letter-spacing:0.166px;">Add-ins</span>
<span class="t" style="left:779.00px;top:59.00px;font-size:12.8px;color:#1c1c1c;letter-spacing:0.057px;">Help</span>
<span class="t" style="left:1064.50px;top:59.00px;font-size:12.8px;color:#1c1c1c;letter-spacing:-0.013px;">Record</span>
<span class="t" style="left:1188.00px;top:59.00px;font-size:12.8px;color:#fff;letter-spacing:-0.300px;transform:scaleX(0.9772);transform-origin:0 0;">Share</span>
<span class="t" style="left:84.80px;top:124.00px;font-size:12px;color:#1c1c1c;letter-spacing:-0.300px;transform:scaleX(0.9225);transform-origin:0 0;">Paste</span>
<span class="t" style="left:186.70px;top:123.00px;font-size:12px;color:#1c1c1c;letter-spacing:-0.368px;">New</span>
<span class="t" style="left:180.20px;top:139.00px;font-size:12px;color:#1c1c1c;letter-spacing:-0.300px;transform:scaleX(0.9652);transform-origin:0 0;">Slide</span>
<span class="t" style="left:687.40px;top:123.00px;font-size:12px;color:#1c1c1c;letter-spacing:-0.300px;transform:scaleX(0.9310);transform-origin:0 0;">Shapes</span>
<span class="t" style="left:731.10px;top:123.00px;font-size:12px;color:#1c1c1c;letter-spacing:-0.099px;">Arrange</span>
<span class="t" style="left:785.20px;top:123.00px;font-size:12px;color:#a8a8a8;">Quick</span>
<span class="t" style="left:780.20px;top:139.00px;font-size:12px;color:#a8a8a8;letter-spacing:-0.300px;transform:scaleX(0.9462);transform-origin:0 0;">Styles</span>
<span class="t" style="left:882.80px;top:121.00px;font-size:12px;color:#1c1c1c;letter-spacing:-0.233px;">Editing</span>
<span class="t" style="left:939.60px;top:124.00px;font-size:12px;color:#1c1c1c;letter-spacing:-0.174px;">Dictate</span>
<span class="t" style="left:997.20px;top:123.00px;font-size:12px;color:#a8a8a8;letter-spacing:-0.151px;">Sensitivity</span>
<span class="t" style="left:1071.60px;top:123.00px;font-size:12px;color:#1c1c1c;letter-spacing:-0.300px;transform:scaleX(0.9864);transform-origin:0 0;">Designer</span>
<span class="t" style="left:26.80px;top:164.00px;font-size:11.5px;color:#1c1c1c;letter-spacing:0.034px;">Undo</span>
<span class="t" style="left:85.80px;top:164.00px;font-size:11.5px;color:#1c1c1c;letter-spacing:0.048px;">Clipboard</span>
<span class="t" style="left:204.80px;top:164.00px;font-size:11.5px;color:#1c1c1c;letter-spacing:-0.300px;transform:scaleX(0.9622);transform-origin:0 0;">Slides</span>
<span class="t" style="left:360.80px;top:164.00px;font-size:11.5px;color:#1c1c1c;letter-spacing:-0.070px;">Font</span>
<span class="t" style="left:549.50px;top:164.00px;font-size:11.5px;color:#1c1c1c;letter-spacing:-0.213px;">Paragraph</span>
<span class="t" style="left:745.70px;top:164.00px;font-size:11.5px;color:#1c1c1c;letter-spacing:0.120px;">Drawing</span>
<span class="t" style="left:944.60px;top:164.00px;font-size:11.5px;color:#1c1c1c;letter-spacing:-0.300px;transform:scaleX(0.9544);transform-origin:0 0;">Voice</span>
<span class="t" style="left:998.70px;top:164.00px;font-size:11.5px;color:#1c1c1c;letter-spacing:-0.176px;">Sensitivity</span>
<span class="t" style="left:1071.60px;top:164.00px;font-size:11.5px;color:#1c1c1c;letter-spacing:-0.103px;">Designer</span>
<span class="t" style="left:441.20px;top:90.00px;font-size:11px;color:#b5b5b5;">18</span>
<span class="t" style="left:285.50px;top:113.00px;font-size:14px;color:#a8a8a8;font-weight:700;transform:scaleX(0.7519);transform-origin:0 0;">B</span>
<span class="t" style="left:311.90px;top:113.00px;font-size:14px;color:#a8a8a8;font-style:italic;font-family:'Liberation Serif',serif;">I</span>
<span class="t" style="left:336.20px;top:113.00px;font-size:14px;color:#a8a8a8;transform:scaleX(0.8409);transform-origin:0 0;">U</span>
<span class="t" style="left:363.00px;top:113.00px;font-size:14px;color:#a8a8a8;font-weight:700;transform:scaleX(0.8139);transform-origin:0 0;text-shadow:0.8px 0.8px 1px rgba(0,0,0,.25);">S</span>
<span class="t" style="left:387.30px;top:116.00px;font-size:12px;color:#a8a8a8;transform:scaleX(0.8468);transform-origin:0 0;">ab</span>
<span class="t" style="left:411.20px;top:112.00px;font-size:12px;color:#a8a8a8;letter-spacing:0.780px;">AV</span>
<span class="t" style="left:325.80px;top:137.00px;font-size:15px;color:#a8a8a8;transform:scaleX(0.8696);transform-origin:0 0;">A</span>
<span class="t" style="left:363.70px;top:140.00px;font-size:13px;color:#a8a8a8;letter-spacing:-0.300px;transform:scaleX(0.9928);transform-origin:0 0;">Aa</span>
<span class="t" style="left:409.30px;top:138.00px;font-size:17.5px;color:#a8a8a8;transform:scaleX(0.9081);transform-origin:0 0;">A</span>
<span class="t" style="left:436.80px;top:141.00px;font-size:13.5px;color:#a8a8a8;transform:scaleX(0.9329);transform-origin:0 0;">A</span>
<span class="t" style="left:463.30px;top:138.00px;font-size:17.5px;color:#a8a8a8;transform:scaleX(0.8910);transform-origin:0 0;">A</span>
<span class="t" style="left:544.30px;top:86.17px;font-size:5px;color:#9a9a9a;">1</span>
<span class="t" style="left:544.10px;top:92.27px;font-size:5px;color:#9a9a9a;">2</span>
<span class="t" style="left:544.10px;top:98.27px;font-size:5px;color:#9a9a9a;">3</span>
<span class="t" style="left:641.30px;top:87.00px;font-size:10px;color:#a8a8a8;transform:scaleX(0.9745);transform-origin:0 0;">A</span>
<span class="t" style="left:14.20px;top:196.00px;font-size:14px;color:#c8553a;transform:scaleX(0.7194);transform-origin:0 0;">1</span>
<span class="t" style="left:9.50px;top:748.00px;font-size:11px;color:#262626;">Slide 1 of 1</span>
<span class="t" style="left:116.80px;top:748.00px;font-size:11px;color:#262626;letter-spacing:0.091px;">English (United States)</span>
<span class="t" style="left:267.50px;top:748.00px;font-size:11px;color:#262626;letter-spacing:0.111px;">Accessibility: Investigate</span>
<span class="t" style="left:713.90px;top:749.00px;font-size:11px;color:#262626;letter-spacing:-0.083px;">Notes</span>
<span class="t" style="left:777.90px;top:749.00px;font-size:11px;color:#262626;letter-spacing:0.122px;">Display Settings</span>
<span class="t" style="left:1183.50px;top:748.00px;font-size:11px;color:#262626;letter-spacing:-0.300px;transform:scaleX(0.9558);transform-origin:0 0;">66 %</span>
<span class="t" style="left:329.08px;top:185.00px;font-size:10.5px;color:#444;letter-spacing:-0.300px;transform:scaleX(0.9494);transform-origin:0 0;">16</span>
<span class="t" style="left:353.90px;top:185.00px;font-size:10.5px;color:#444;letter-spacing:-0.300px;transform:scaleX(0.9494);transform-origin:0 0;">15</span>
<span class="t" style="left:378.72px;top:185.00px;font-size:10.5px;color:#444;letter-spacing:-0.300px;transform:scaleX(0.9494);transform-origin:0 0;">14</span>
<span class="t" style="left:403.54px;top:185.00px;font-size:10.5px;color:#444;letter-spacing:-0.300px;transform:scaleX(0.9494);transform-origin:0 0;">13</span>
<span class="t" style="left:428.36px;top:185.00px;font-size:10.5px;color:#444;letter-spacing:-0.300px;transform:scaleX(0.9494);transform-origin:0 0;">12</span>
<span class="t" style="left:453.18px;top:185.00px;font-size:10.5px;color:#444;letter-spacing:-0.099px;">11</span>
<span class="t" style="left:478.00px;top:185.00px;font-size:10.5px;color:#444;letter-spacing:-0.300px;transform:scaleX(0.9494);transform-origin:0 0;">10</span>
<span class="t" style="left:505.77px;top:185.00px;font-size:10.5px;color:#444;">9</span>
<span class="t" style="left:530.59px;top:185.00px;font-size:10.5px;color:#444;">8</span>
<span class="t" style="left:555.41px;top:185.00px;font-size:10.5px;color:#444;">7</span>
<span class="t" style="left:580.23px;top:185.00px;font-size:10.5px;color:#444;">6</span>
<span class="t" style="left:605.05px;top:185.00px;font-size:10.5px;color:#444;">5</span>
<span class="t" style="left:629.87px;top:185.00px;font-size:10.5px;color:#444;">4</span>
<span class="t" style="left:654.69px;top:185.00px;font-size:10.5px;color:#444;">3</span>
<span class="t" style="left:679.51px;top:185.00px;font-size:10.5px;color:#444;">2</span>
<span class="t" style="left:704.33px;top:185.00px;font-size:10.5px;color:#444;">1</span>
<span class="t" style="left:729.15px;top:185.00px;font-size:10.5px;color:#444;">0</span>
<span class="t" style="left:753.97px;top:185.00px;font-size:10.5px;color:#444;">1</span>
<span class="t" style="left:778.79px;top:185.00px;font-size:10.5px;color:#444;">2</span>
<span class="t" style="left:803.61px;top:185.00px;font-size:10.5px;color:#444;">3</span>
<span class="t" style="left:828.43px;top:185.00px;font-size:10.5px;color:#444;">4</span>
<span class="t" style="left:853.25px;top:185.00px;font-size:10.5px;color:#444;">5</span>
<span class="t" style="left:878.07px;top:185.00px;font-size:10.5px;color:#444;">6</span>
<span class="t" style="left:902.89px;top:185.00px;font-size:10.5px;color:#444;">7</span>
<span class="t" style="left:927.71px;top:185.00px;font-size:10.5px;color:#444;">8</span>
<span class="t" style="left:952.53px;top:185.00px;font-size:10.5px;color:#444;">9</span>
<span class="t" style="left:974.40px;top:185.00px;font-size:10.5px;color:#444;letter-spacing:-0.300px;transform:scaleX(0.9494);transform-origin:0 0;">10</span>
<span class="t" style="left:999.22px;top:185.00px;font-size:10.5px;color:#444;letter-spacing:-0.099px;">11</span>
<span class="t" style="left:1024.04px;top:185.00px;font-size:10.5px;color:#444;letter-spacing:-0.300px;transform:scaleX(0.9494);transform-origin:0 0;">12</span>
<span class="t" style="left:1048.86px;top:185.00px;font-size:10.5px;color:#444;letter-spacing:-0.300px;transform:scaleX(0.9494);transform-origin:0 0;">13</span>
<span class="t" style="left:1073.68px;top:185.00px;font-size:10.5px;color:#444;letter-spacing:-0.300px;transform:scaleX(0.9494);transform-origin:0 0;">14</span>
<span class="t" style="left:1098.50px;top:185.00px;font-size:10.5px;color:#444;letter-spacing:-0.300px;transform:scaleX(0.9494);transform-origin:0 0;">15</span>
<span class="t" style="left:1123.32px;top:185.00px;font-size:10.5px;color:#444;letter-spacing:-0.300px;transform:scaleX(0.9494);transform-origin:0 0;">16</span>
<span class="t" style="left:200.20px;top:242.27px;width:10px;height:11px;line-height:11px;text-align:center;font-size:10.5px;color:#444;transform:rotate(-90deg);">9</span>
<span class="t" style="left:200.20px;top:267.04px;width:10px;height:11px;line-height:11px;text-align:center;font-size:10.5px;color:#444;transform:rotate(-90deg);">8</span>
<span class="t" style="left:200.20px;top:291.81px;width:10px;height:11px;line-height:11px;text-align:center;font-size:10.5px;color:#444;transform:rotate(-90deg);">7</span>
<span class="t" style="left:200.20px;top:316.58px;width:10px;height:11px;line-height:11px;text-align:center;font-size:10.5px;color:#444;transform:rotate(-90deg);">6</span>
<span class="t" style="left:200.20px;top:341.35px;width:10px;height:11px;line-height:11px;text-align:center;font-size:10.5px;color:#444;transform:rotate(-90deg);">5</span>
<span class="t" style="left:200.20px;top:366.12px;width:10px;height:11px;line-height:11px;text-align:center;font-size:10.5px;color:#444;transform:rotate(-90deg);">4</span>
<span class="t" style="left:200.20px;top:390.89px;width:10px;height:11px;line-height:11px;text-align:center;font-size:10.5px;color:#444;transform:rotate(-90deg);">3</span>
<span class="t" style="left:200.20px;top:415.66px;width:10px;height:11px;line-height:11px;text-align:center;font-size:10.5px;color:#444;transform:rotate(-90deg);">2</span>
<span class="t" style="left:200.20px;top:440.43px;width:10px;height:11px;line-height:11px;text-align:center;font-size:10.5px;color:#444;transform:rotate(-90deg);">1</span>
<span class="t" style="left:200.20px;top:465.20px;width:10px;height:11px;line-height:11px;text-align:center;font-size:10.5px;color:#444;transform:rotate(-90deg);">0</span>
<span class="t" style="left:200.20px;top:489.97px;width:10px;height:11px;line-height:11px;text-align:center;font-size:10.5px;color:#444;transform:rotate(-90deg);">1</span>
<span class="t" style="left:200.20px;top:514.74px;width:10px;height:11px;line-height:11px;text-align:center;font-size:10.5px;color:#444;transform:rotate(-90deg);">2</span>
<span class="t" style="left:200.20px;top:539.51px;width:10px;height:11px;line-height:11px;text-align:center;font-size:10.5px;color:#444;transform:rotate(-90deg);">3</span>
<span class="t" style="left:200.20px;top:564.28px;width:10px;height:11px;line-height:11px;text-align:center;font-size:10.5px;color:#444;transform:rotate(-90deg);">4</span>
<span class="t" style="left:200.20px;top:589.05px;width:10px;height:11px;line-height:11px;text-align:center;font-size:10.5px;color:#444;transform:rotate(-90deg);">5</span>
<span class="t" style="left:200.20px;top:613.82px;width:10px;height:11px;line-height:11px;text-align:center;font-size:10.5px;color:#444;transform:rotate(-90deg);">6</span>
<span class="t" style="left:200.20px;top:638.59px;width:10px;height:11px;line-height:11px;text-align:center;font-size:10.5px;color:#444;transform:rotate(-90deg);">7</span>
<span class="t" style="left:200.20px;top:663.36px;width:10px;height:11px;line-height:11px;text-align:center;font-size:10.5px;color:#444;transform:rotate(-90deg);">8</span>
<span class="t" style="left:200.20px;top:688.13px;width:10px;height:11px;line-height:11px;text-align:center;font-size:10.5px;color:#444;transform:rotate(-90deg);">9</span>
<span class="t" style="left:333.20px;top:240.00px;font-size:14px;color:#fff;font-weight:700;transform:scaleX(0.8032);transform-origin:0 0;">ES</span>
<span class="t" style="left:331.70px;top:252.00px;font-size:14px;color:#fff;font-weight:700;transform:scaleX(0.8586);transform-origin:0 0;">BRI</span>
<span class="t" style="left:330.20px;top:264.00px;font-size:14px;color:#fff;font-weight:700;transform:scaleX(0.9596);transform-origin:0 0;">NA</span>
<span class="t" style="left:350.00px;top:266.00px;font-size:12px;color:#f2c230;font-weight:700;">;</span>
</div>
</body></html>
